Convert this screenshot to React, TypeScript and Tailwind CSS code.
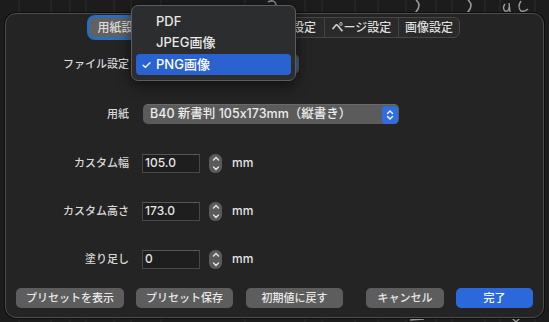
import React from "react";

const lineXs = [19, 51, 70, 86, 114, 131, 161, 245, 305, 322, 355, 378, 406, 436, 452, 485, 500, 535];

function Backdrop() {
  return (
    <svg className="absolute inset-0" width="549" height="322" viewBox="0 0 549 322">
      {lineXs.map((x) => (
        <line key={x} x1={x} y1="0" x2={x} y2="322" stroke="#2d2d2d" strokeWidth="1" />
      ))}
      <path d="M268 2 q6 -3 8 2 q-2 5 -7 8" stroke="#8a8a8a" strokeWidth="1.6" fill="none" />
      <path d="M416 0 q6 5 0 12 l-3 2" stroke="#9a9a9a" strokeWidth="1.6" fill="none" />
      <path d="M468 0 q6 5 0 12 l-3 2" stroke="#9a9a9a" strokeWidth="1.6" fill="none" />
      <path d="M505 4 q-3 4 0 7 q4 1 4 -4 M509 3 l1 9" stroke="#9a9a9a" strokeWidth="1.4" fill="none" />
      <path d="M521 1 q-4 6 0 10 q4 1 7 -2" stroke="#9a9a9a" strokeWidth="1.4" fill="none" />
      <path d="M410 320 l14 -1" stroke="#9a9a9a" strokeWidth="1.6" fill="none" />
      <path d="M512 318 l4 4 l4 -4" stroke="#9a9a9a" strokeWidth="1.4" fill="none" />
    </svg>
  );
}

function UpDown() {
  return (
    <svg width="8" height="12" viewBox="0 0 8 12">
      <path d="M1.5 4.5 L4 2 L6.5 4.5 M1.5 7.5 L4 10 L6.5 7.5" stroke="currentColor" strokeWidth="1.4" fill="none" strokeLinecap="round" strokeLinejoin="round" />
    </svg>
  );
}

function Stepper() {
  return (
    <div className="ml-[9px] flex h-[19px] w-[13px] flex-col items-center justify-between rounded-[6px] bg-[#5a5a5a] py-[2px] text-[#e6e6e6]">
      <svg width="8" height="5" viewBox="0 0 8 5">
        <path d="M1.5 4 L4 1.5 L6.5 4" stroke="currentColor" strokeWidth="1.4" fill="none" strokeLinecap="round" />
      </svg>
      <svg width="8" height="5" viewBox="0 0 8 5">
        <path d="M1.5 1 L4 3.5 L6.5 1" stroke="currentColor" strokeWidth="1.4" fill="none" strokeLinecap="round" />
      </svg>
    </div>
  );
}

function Label({ text }: { text: string }) {
  return <span className="w-[124px] pr-[1px] text-right text-[11px] text-[#d8d8d8]">{text}</span>;
}

function NumberRow({ label, value, mt }: { label: string; value: string; mt: string }) {
  return (
    <div className={`flex h-[20px] items-center ${mt}`}>
      <Label text={label} />
      <div className="ml-[12px] flex h-[19px] w-[58px] items-center border border-[#474747] border-t-[#555] bg-[#1e1e1e] pl-[2px] text-[12px] text-[#e6e6e6]">
        {value}
      </div>
      <Stepper />
      <span className="ml-[10px] text-[12px] text-[#e2e2e2]">mm</span>
    </div>
  );
}

function Tabs() {
  return (
    <div className="mx-auto mt-[3px] flex h-[21px] w-[371px] items-center rounded-[6px] border border-[#464646] bg-[#2a2a2a] text-[12px] text-[#dedede]">
      <div className="flex h-[19px] w-[63px] items-center justify-center rounded-[5px] bg-[#616161] ring-[3px] ring-[#2b6cbc]">
        用紙設定
      </div>
      <div className="flex h-full w-[172px] items-center justify-end border-r border-[#454545] pr-[8px]">
        テキスト・フォント設定
      </div>
      <div className="flex h-full w-[74px] items-center justify-center border-r border-[#454545]">ページ設定</div>
      <div className="flex h-full flex-1 items-center justify-center">画像設定</div>
    </div>
  );
}

function Menu() {
  const items = ["PDF", "JPEG画像", "PNG画像"];
  return (
    <div className="absolute left-[131px] top-[5px] w-[165px] rounded-[7px] border border-[#5c5c5c] bg-[#2c2d2f] px-[4px] py-[5px] shadow-[0_4px_14px_rgba(0,0,0,0.6)]">
      {items.map((t, i) => {
        const on = i === 2;
        return (
          <div
            key={t}
            className={`flex h-[21px] items-center rounded-[4px] text-[13px] ${on ? "mt-[1px] bg-[#2a62cf] text-white" : "text-[#e8e8e8]"}`}
          >
            <span className="w-[20px] pl-[5px] text-[12px]">{on ? "✓" : ""}</span>
            <span>{t}</span>
          </div>
        );
      })}
    </div>
  );
}

export default function App() {
  return (
    <div className="relative h-[322px] w-[549px] overflow-hidden bg-[#1c1c1c] font-['Inter','Noto_Sans_CJK_JP',sans-serif] font-medium">
      <Backdrop />
      <div className="relative px-[5px] pt-[13px]">
        <div className="flex h-[305px] flex-col rounded-[11px] border border-[#4c4c4c] bg-[#242424] shadow-[0_0_0_1px_#0e0e0e]">
          <Tabs />

          <div className="mt-[16px] flex h-[20px] items-center">
            <Label text="ファイル設定" />
            <div className="ml-[13px] flex h-[20px] w-[156px] items-center justify-end rounded-[5px] bg-[#5b5b5b] pr-[2px]">
              <div className="flex h-[16px] w-[14px] items-center justify-center rounded-[4px] bg-[#2f6de0] text-white">
                <UpDown />
              </div>
            </div>
          </div>

          <div className="mt-[30px] flex h-[20px] items-center">
            <Label text="用紙" />
            <div className="ml-[13px] flex h-[20px] w-[256px] items-center justify-between rounded-[5px] border-t border-[#6a6a6a] bg-[#5b5b5b] pl-[7px] pr-[1px] text-[12.5px] text-[#ececec]">
              <span>B40 新書判 105x173mm（縦書き）</span>
              <div className="flex h-[18px] w-[16px] items-center justify-center rounded-[4px] bg-[#2f6de0] text-white">
                <UpDown />
              </div>
            </div>
          </div>

          <NumberRow label="カスタム幅" value="105.0" mt="mt-[29px]" />
          <NumberRow label="カスタム高さ" value="173.0" mt="mt-[28px]" />
          <NumberRow label="塗り足し" value="0" mt="mt-[28px]" />

          <div className="mt-auto flex items-center px-[10px] pb-[9px] text-[11px] text-[#e8e8e8]">
            <button className="h-[20px] w-[108px] rounded-[5px] bg-[#5d5d5d]">プリセットを表示</button>
            <button className="ml-[12px] h-[20px] w-[97px] rounded-[5px] bg-[#5d5d5d]">プリセット保存</button>
            <button className="ml-[13px] h-[20px] w-[97px] rounded-[5px] bg-[#5d5d5d]">初期値に戻す</button>
            <button className="ml-[23px] h-[20px] w-[78px] rounded-[5px] bg-[#5d5d5d]">キャンセル</button>
            <button className="ml-[12px] h-[20px] w-[77px] rounded-[5px] bg-[#2a68dc] text-white">完了</button>
          </div>
        </div>
      </div>
      <Menu />
    </div>
  );
}
